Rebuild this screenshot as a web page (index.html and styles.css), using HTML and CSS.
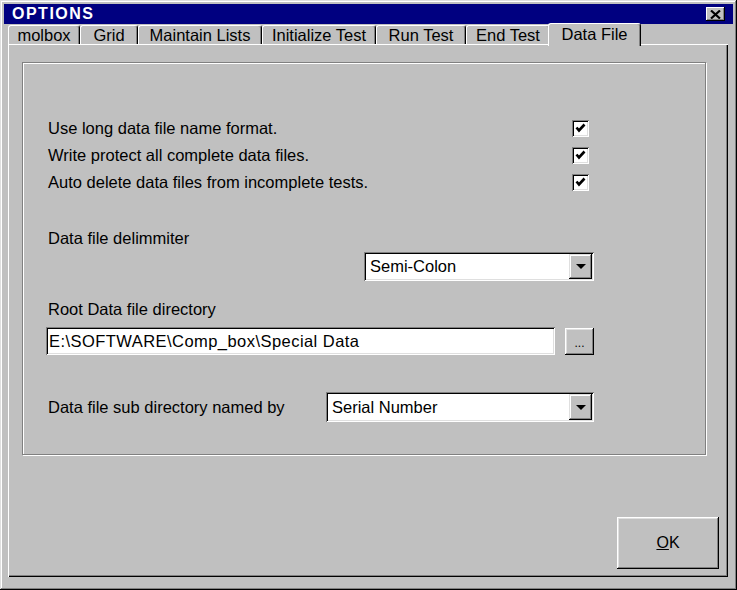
FILE: index.html
```html
<!DOCTYPE html>
<html lang="en">
<head>
  <meta charset="UTF-8">
  <title>Options</title>
  <link rel="stylesheet" href="styles.css">
</head>
<body>
  <div class="window">
    <div class="titlebar">
      <span class="title">OPTIONS</span>
      <span class="close">
        <svg width="11" height="9" viewBox="0 0 11 9">
          <path d="M1 0.5 L10 8.5 M10 0.5 L1 8.5" stroke="#000" stroke-width="2.2" fill="none"/>
        </svg>
      </span>
    </div>

    <div class="tabs">
      <div class="tab tab-molbox">molbox</div>
      <div class="tab tab-grid">Grid</div>
      <div class="tab tab-lists">Maintain Lists</div>
      <div class="tab tab-init">Initialize Test</div>
      <div class="tab tab-run">Run Test</div>
      <div class="tab tab-end">End Test</div>
      <div class="tab tab-data active">Data File</div>
    </div>

    <div class="panel">
      <div class="group">
        <div class="check-row">
          <span>Use long data file name format.</span>
          <span class="checkbox"><svg viewBox="0 0 13 13"><path d="M2.5 5.5 L5 8.5 L10.5 2.5" stroke="#000" stroke-width="2.6" fill="none"/></svg></span>
        </div>
        <div class="check-row">
          <span>Write protect all complete data files.</span>
          <span class="checkbox"><svg viewBox="0 0 13 13"><path d="M2.5 5.5 L5 8.5 L10.5 2.5" stroke="#000" stroke-width="2.6" fill="none"/></svg></span>
        </div>
        <div class="check-row">
          <span>Auto delete data files from incomplete tests.</span>
          <span class="checkbox"><svg viewBox="0 0 13 13"><path d="M2.5 5.5 L5 8.5 L10.5 2.5" stroke="#000" stroke-width="2.6" fill="none"/></svg></span>
        </div>

        <div class="label delim-label">Data file delimmiter</div>
        <div class="combo combo-delim">
          <span class="combo-text">Semi-Colon</span>
          <span class="drop"><span class="arrow"></span></span>
        </div>

        <div class="label root-label">Root Data file directory</div>
        <div class="path-row">
          <div class="textbox">E:\SOFTWARE\Comp_box\Special Data</div>
          <div class="browse">...</div>
        </div>

        <div class="sub-row">
          <span class="label">Data file sub directory named by</span>
          <div class="combo combo-sub">
            <span class="combo-text">Serial Number</span>
            <span class="drop"><span class="arrow"></span></span>
          </div>
        </div>
      </div>

      <div class="footer">
        <div class="ok-button"><u>O</u>K</div>
      </div>
    </div>
  </div>
</body>
</html>
```

FILE: styles.css
```css
body {
  margin: 0;
  background-color: #c0c0c0;
  font-family: "Liberation Sans", Arial, sans-serif;
  font-size: 16.5px;
  color: #000;
}

.window {
  width: 737px;
  height: 590px;
  box-sizing: border-box;
  padding: 4px;
  display: flex;
  flex-direction: column;
  background-color: #c0c0c0;
  box-shadow: inset -1px -1px #000, inset 1px 1px #dfdfdf, inset -2px -2px #808080, inset 2px 2px #fff;
}

.titlebar {
  height: 20px;
  background-color: #000080;
  color: #fff;
  display: flex;
  align-items: center;
  justify-content: space-between;
  padding: 0 8px 0 8px;
}

.title {
  font-weight: bold;
  font-size: 16px;
  letter-spacing: 1.5px;
}

.close {
  width: 19px;
  height: 14px;
  background-color: #c0c0c0;
  display: flex;
  align-items: center;
  justify-content: center;
  box-shadow: inset -1px -1px #000, inset 1px 1px #fff, inset -2px -2px #808080;
}

/* tab strip */
.tabs {
  display: flex;
  align-items: flex-end;
  height: 22px;
  padding-left: 4px;
  margin-bottom: -2px;
  position: relative;
  z-index: 1;
}

.tab {
  box-sizing: border-box;
  height: 19px;
  margin-bottom: 2px;
  padding-top: 1px;
  border-top: 1px solid #fff;
  border-left: 1px solid #fff;
  border-right: 1px solid #000;
  border-radius: 3px 3px 0 0;
  box-shadow: inset -1px 0 #808080;
  display: flex;
  align-items: center;
  justify-content: center;
  white-space: nowrap;
}

.tab-molbox { width: 72px; }
.tab-grid { width: 58px; }
.tab-lists { width: 124px; }
.tab-init { width: 114px; }
.tab-run { width: 90px; }
.tab-end { width: 84px; }
.tab-data { width: 93px; }

.tab.active {
  height: 23px;
  margin-bottom: 0;
  margin-left: -2px;
  background-color: #c0c0c0;
  padding-bottom: 2px;
}

.panel {
  flex: 1;
  margin: 0 5px 9px 4px;
  display: flex;
  flex-direction: column;
  box-shadow: inset 1px 1px #fff, inset -1px -1px #000, inset -2px -2px #808080;
}

.group {
  margin: 18px 22px 0 14px;
  height: 393px;
  box-sizing: border-box;
  border: 1px solid #808080;
  box-shadow: inset 1px 1px #fff, 1px 1px #fff;
  padding: 52px 111px 0 23px;
  display: flex;
  flex-direction: column;
}

.check-row {
  height: 27px;
  display: flex;
  align-items: center;
  justify-content: space-between;
  padding-left: 2px;
}

.checkbox {
  width: 17px;
  height: 17px;
  box-sizing: border-box;
  padding: 2px;
  margin-right: 5px;
  background-color: #fff;
  box-shadow: inset 1px 1px #808080, inset -1px -1px #fff, inset 2px 2px #000, inset -2px -2px #dfdfdf;
}

.checkbox svg {
  display: block;
  width: 13px;
  height: 13px;
}

.label {
  line-height: 20px;
  padding-left: 2px;
}

.delim-label {
  margin-top: 32px;
}

.combo {
  box-sizing: border-box;
  height: 29px;
  background-color: #fff;
  display: flex;
  align-items: center;
  justify-content: space-between;
  padding: 2px;
  box-shadow: inset 1px 1px #808080, inset -1px -1px #fff, inset 2px 2px #000, inset -2px -2px #dfdfdf;
}

.combo-text {
  padding-left: 4px;
}

.combo-delim {
  width: 230px;
  margin-left: auto;
  margin-top: 4px;
}

.combo-sub {
  width: 268px;
  height: 30px;
}

.drop {
  width: 23px;
  align-self: stretch;
  background-color: #c0c0c0;
  display: flex;
  align-items: center;
  justify-content: center;
  box-shadow: inset -1px -1px #000, inset 1px 1px #dfdfdf, inset -2px -2px #808080, inset 2px 2px #fff;
}

.arrow {
  width: 0;
  height: 0;
  border-left: 5px solid transparent;
  border-right: 5px solid transparent;
  border-top: 5px solid #000;
}

.root-label {
  margin-top: 18px;
}

.path-row {
  margin-top: 8px;
  display: flex;
  align-items: center;
  justify-content: space-between;
}

.textbox {
  box-sizing: border-box;
  width: 509px;
  height: 28px;
  background-color: #fff;
  padding: 0 3px;
  display: flex;
  align-items: center;
  letter-spacing: 0.45px;
  box-shadow: inset 1px 1px #808080, inset -1px -1px #fff, inset 2px 2px #000, inset -2px -2px #dfdfdf;
}

.browse {
  box-sizing: border-box;
  width: 29px;
  height: 27px;
  display: flex;
  align-items: flex-end;
  justify-content: center;
  padding-bottom: 6px;
  font-size: 12px;
  line-height: 12px;
  box-shadow: inset -1px -1px #000, inset 1px 1px #fff, inset -2px -2px #808080, inset 2px 2px #dfdfdf;
}

.sub-row {
  margin-top: 37px;
  display: flex;
  align-items: center;
  justify-content: space-between;
}

.footer {
  margin-top: auto;
  display: flex;
  justify-content: flex-end;
  padding: 0 9px 8px 0;
}

.ok-button {
  box-sizing: border-box;
  width: 102px;
  height: 52px;
  display: flex;
  align-items: center;
  justify-content: center;
  font-size: 16px;
  box-shadow: inset -1px -1px #000, inset 1px 1px #fff, inset -2px -2px #808080, inset 2px 2px #dfdfdf;
}
```
